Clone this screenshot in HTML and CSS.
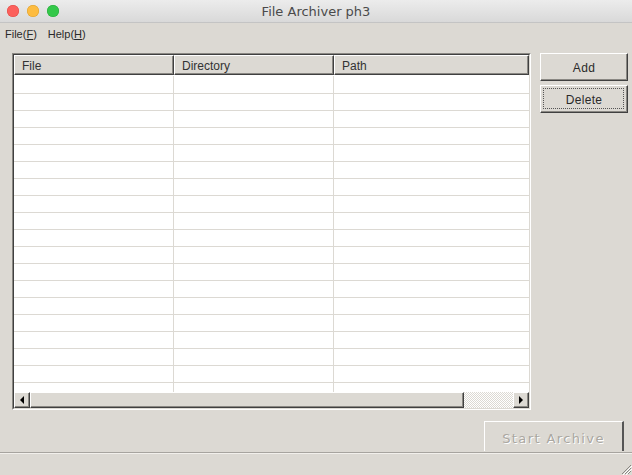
FILE: index.html
```html
<!DOCTYPE html>
<html>
<head>
<meta charset="utf-8">
<link rel="stylesheet" href="styles.css">
</head>
<body>
<div class="window">
  <div class="titlebar">
    <div class="lights">
      <span class="light red"></span>
      <span class="light yellow"></span>
      <span class="light green"></span>
    </div>
    <div class="title">File Archiver ph3</div>
  </div>
  <div class="menubar">
    <span class="menu">File(<u>F</u>)</span>
    <span class="menu">Help(<u>H</u>)</span>
  </div>
  <div class="content">
    <div class="top">
      <div class="table">
        <div class="table-inner">
          <div class="thead">
            <div class="th c1">File</div>
            <div class="th c2">Directory</div>
            <div class="th c3">Path</div>
          </div>
          <div class="tbody">
            <div class="tr"><div class="td c1"></div><div class="td c2"></div><div class="td c3"></div></div>
            <div class="tr"><div class="td c1"></div><div class="td c2"></div><div class="td c3"></div></div>
            <div class="tr"><div class="td c1"></div><div class="td c2"></div><div class="td c3"></div></div>
            <div class="tr"><div class="td c1"></div><div class="td c2"></div><div class="td c3"></div></div>
            <div class="tr"><div class="td c1"></div><div class="td c2"></div><div class="td c3"></div></div>
            <div class="tr"><div class="td c1"></div><div class="td c2"></div><div class="td c3"></div></div>
            <div class="tr"><div class="td c1"></div><div class="td c2"></div><div class="td c3"></div></div>
            <div class="tr"><div class="td c1"></div><div class="td c2"></div><div class="td c3"></div></div>
            <div class="tr"><div class="td c1"></div><div class="td c2"></div><div class="td c3"></div></div>
            <div class="tr"><div class="td c1"></div><div class="td c2"></div><div class="td c3"></div></div>
            <div class="tr"><div class="td c1"></div><div class="td c2"></div><div class="td c3"></div></div>
            <div class="tr"><div class="td c1"></div><div class="td c2"></div><div class="td c3"></div></div>
            <div class="tr"><div class="td c1"></div><div class="td c2"></div><div class="td c3"></div></div>
            <div class="tr"><div class="td c1"></div><div class="td c2"></div><div class="td c3"></div></div>
            <div class="tr"><div class="td c1"></div><div class="td c2"></div><div class="td c3"></div></div>
            <div class="tr"><div class="td c1"></div><div class="td c2"></div><div class="td c3"></div></div>
            <div class="tr"><div class="td c1"></div><div class="td c2"></div><div class="td c3"></div></div>
            <div class="tr"><div class="td c1"></div><div class="td c2"></div><div class="td c3"></div></div>
            <div class="tr"><div class="td c1"></div><div class="td c2"></div><div class="td c3"></div></div>
          </div>
          <div class="hscroll">
            <div class="sbtn"><span class="arrow-left"></span></div>
            <div class="thumb"></div>
            <div class="trough"></div>
            <div class="sbtn"><span class="arrow-right"></span></div>
          </div>
        </div>
      </div>
      <div class="side">
        <button class="btn">Add</button>
        <button class="btn focused">Delete</button>
      </div>
    </div>
    <div class="bottom">
      <button class="btn-start" disabled>Start Archive</button>
    </div>
  </div>
  <div class="statusbar">
    <svg class="grip" width="11" height="11" viewBox="0 0 11 11">
      <line x1="10" y1="1" x2="1" y2="10" stroke="#8a8883" stroke-width="1"/>
      <line x1="10" y1="4" x2="4" y2="10" stroke="#8a8883" stroke-width="1"/>
      <line x1="10" y1="7" x2="7" y2="10" stroke="#8a8883" stroke-width="1"/>
      <line x1="11" y1="2" x2="2" y2="11" stroke="#ffffff" stroke-width="1"/>
      <line x1="11" y1="5" x2="5" y2="11" stroke="#ffffff" stroke-width="1"/>
    </svg>
  </div>
</div>
</body>
</html>
```

FILE: styles.css
```css
* { box-sizing: border-box; }
html, body { margin: 0; padding: 0; }
body {
  width: 632px;
  height: 475px;
  overflow: hidden;
  font-family: "Liberation Sans", Arial, sans-serif;
  color: #222;
}
.window {
  width: 632px;
  height: 475px;
  display: flex;
  flex-direction: column;
  background: #dcd9d3;
}
.titlebar {
  height: 23px;
  flex: none;
  display: flex;
  align-items: center;
  background: linear-gradient(#ececec, #d9d9d9);
  border-bottom: 1px solid #c4c4c4;
  padding-left: 7px;
}
.lights { display: flex; gap: 8px; width: 56px; flex: none; }
.light { width: 12px; height: 12px; border-radius: 50%; display: block; }
.red { background: #fc605c; box-shadow: inset 0 0 0 0.5px #de4a45; }
.yellow { background: #fdbc40; box-shadow: inset 0 0 0 0.5px #dc9e2c; }
.green { background: #34c84a; box-shadow: inset 0 0 0 0.5px #27a83a; }
.title {
  flex: 1;
  text-align: center;
  font-family: "DejaVu Sans", sans-serif;
  font-size: 13px;
  color: #4a4a4a;
  margin-right: 63px;
  padding-top: 1px;
}
.menubar {
  height: 21px;
  flex: none;
  display: flex;
  align-items: center;
  gap: 11px;
  padding-left: 5px;
  font-size: 11px;
  color: #2a2a2a;
}
.menu u { text-decoration: underline; text-underline-offset: 1px; }
.content {
  flex: 1;
  display: flex;
  flex-direction: column;
  justify-content: space-between;
  padding: 9px 4px 1px 12px;
}
.top { display: flex; gap: 9px; align-items: flex-start; }
.table {
  width: 519px;
  height: 357px;
  border: 1px solid;
  border-color: #8a8883 #ffffff #ffffff #8a8883;
}
.table-inner {
  height: 100%;
  border: 1px solid;
  border-color: #404040 #dcd9d3 #dcd9d3 #404040;
  display: flex;
  flex-direction: column;
  background: #fff;
}
.thead { display: flex; height: 20px; flex: none; background: #dcd9d3; }
.th {
  font-size: 12px;
  color: #333;
  padding: 3px 0 0 7px;
  border-top: 1px solid #fff;
  border-left: 1px solid #fff;
  border-right: 1px solid #404040;
  border-bottom: 1px solid #404040;
  box-shadow: inset -1px -1px 0 #8a8883;
}
.c1 { width: 160px; flex: none; }
.c2 { width: 160px; flex: none; }
.c3 { flex: 1; }
.tbody { flex: 1; overflow: hidden; background: #fff; padding-top: 1px; }
.tr { display: flex; height: 17px; border-bottom: 1px solid #dcd9d3; }
.tr:first-child { height: 18px; }
.td { border-right: 1px solid #dcd9d3; }
.td.c3 { border-right: none; }
.hscroll { height: 16px; flex: none; display: flex; }
.sbtn {
  width: 16px;
  flex: none;
  background: #dcd9d3;
  border-top: 1px solid #fff;
  border-left: 1px solid #fff;
  border-right: 1px solid #404040;
  border-bottom: 1px solid #404040;
  box-shadow: inset -1px -1px 0 #8a8883;
  display: flex;
  align-items: center;
  justify-content: center;
}
.arrow-left {
  width: 0; height: 0;
  border-top: 4px solid transparent;
  border-bottom: 4px solid transparent;
  border-right: 4px solid #000;
}
.arrow-right {
  width: 0; height: 0;
  border-top: 4px solid transparent;
  border-bottom: 4px solid transparent;
  border-left: 4px solid #000;
}
.thumb {
  width: 434px;
  flex: none;
  background: #dcd9d3;
  border-top: 1px solid #fff;
  border-left: 1px solid #fff;
  border-right: 1px solid #404040;
  border-bottom: 1px solid #404040;
  box-shadow: inset -1px -1px 0 #8a8883;
}
.trough {
  flex: 1;
  background: repeating-conic-gradient(#ffffff 0 25%, #dcd9d3 0 50%) 0 0 / 2px 2px;
}
.side { display: flex; flex-direction: column; gap: 4px; width: 88px; }
.btn {
  position: relative;
  height: 28px;
  width: 88px;
  background: #dcd9d3;
  font-family: "Liberation Sans", Arial, sans-serif;
  font-size: 12px;
  letter-spacing: 0.3px;
  color: #2a2a2a;
  border-top: 1px solid #fff;
  border-left: 1px solid #fff;
  border-right: 1px solid #404040;
  border-bottom: 1px solid #404040;
  box-shadow: inset -1px -1px 0 #8a8883;
  padding: 2px 0 0 0;
  margin: 0;
}
.btn.focused::after {
  content: "";
  position: absolute;
  left: 2px; top: 2px; right: 3px; bottom: 3px;
  border: 1px dotted #555;
}
.bottom { display: flex; justify-content: flex-end; padding-right: 4px; }
.btn-start {
  width: 140px;
  height: 30px;
  background: #dcd9d3;
  border: none;
  border-top: 1px solid #fff;
  border-left: 1px solid #fff;
  border-right: 2px solid #555;
  font-family: "DejaVu Sans", sans-serif;
  font-size: 13px;
  letter-spacing: 1.4px;
  color: #aaa7a1;
  text-shadow: 1px 1px 0 #fff;
  padding: 3px 0 0 0;
  margin: 0;
}
.statusbar {
  height: 23px;
  flex: none;
  border-top: 1px solid #a7a49f;
  box-shadow: inset 0 1px 0 #f2f0ec;
  display: flex;
  justify-content: flex-end;
  align-items: flex-end;
}
.grip { display: block; }
```
